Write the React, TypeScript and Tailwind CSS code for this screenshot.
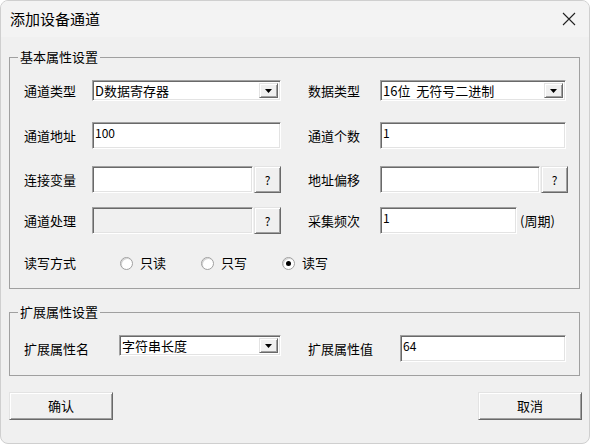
import React from "react"

const sunken =
    "border border-t-[#a0a0a0] border-l-[#a0a0a0] border-r-white border-b-white shadow-[inset_1px_1px_0_#696969,inset_-1px_-1px_0_#e3e3e3]"
const raised =
    "border border-t-[#e3e3e3] border-l-[#e3e3e3] border-r-[#696969] border-b-[#696969] shadow-[inset_1px_1px_0_#ffffff,inset_-1px_-1px_0_#a0a0a0] bg-[#f0f0f0]"

function Combo({ value, width }: { value: string; width: string }) {
    return (
        <div className={`${sunken} ${width} h-[21px] bg-white flex items-center justify-between pl-[2px] pr-[2px]`}>
            <span className="text-[13px] leading-[15px] text-black whitespace-pre">{value}</span>
            <div className={`${raised} w-[19px] h-[15px] flex items-center justify-center`}>
                <svg width="7" height="4" viewBox="0 0 7 4">
                    <path d="M0 0h7L3.5 4z" fill="#000" />
                </svg>
            </div>
        </div>
    )
}

function TextBox({ value, width, disabled }: { value?: string; width: string; disabled?: boolean }) {
    return (
        <div className={`${sunken} ${width} h-[27px] ${disabled ? "bg-[#f0f0f0]" : "bg-white"} pl-[2px]`}>
            <span className="text-[12px] leading-[14px] text-black">{value}</span>
        </div>
    )
}

function AskButton() {
    return (
        <div className={`${raised} w-[27px] h-[27px] flex items-center justify-center text-[12px] text-black`}>?</div>
    )
}

function Radio({ label, checked }: { label: string; checked?: boolean }) {
    return (
        <div className="flex items-center gap-[7px]">
            <div className="w-[13px] h-[13px] rounded-full bg-white border border-[#a0a0a0] shadow-[inset_1px_1px_0_#d4d4d4] flex items-center justify-center">
                {checked && <div className="w-[5px] h-[5px] rounded-full bg-black" />}
            </div>
            <span className="text-[13px]">{label}</span>
        </div>
    )
}

export default function App() {
    return (
        <div className="w-[590px] h-[444px] bg-white font-['Noto_Sans_CJK_SC',sans-serif] text-black">
            <div className="w-[590px] h-[444px] rounded-[8px] border border-[#cfcfcf] bg-[#f0f0f0] overflow-hidden flex flex-col">
                {/* title bar */}
                <div className="h-[36px] bg-[#f3f3f3] flex items-center justify-between pl-[9px] pr-[13px]">
                    <span className="text-[15px]">添加设备通道</span>
                    <svg width="14" height="14" viewBox="0 0 14 14">
                        <path d="M1 1L13 13M13 1L1 13" stroke="#222" strokeWidth="1.1" />
                    </svg>
                </div>

                <fieldset className="ml-[8px] w-[571px] mt-[13px] border border-[#a0a0a0] pl-[14px] pb-[15px]">
                    <legend className="ml-[-6px] px-[2px] text-[13px] leading-[14px]">基本属性设置</legend>

                    <div className="flex items-center h-[21px] mt-[16px] text-[13px]">
                        <span className="w-[68px]">通道类型</span>
                        <Combo value="D数据寄存器" width="w-[189px]" />
                        <span className="w-[72px] ml-[27px]">数据类型</span>
                        <Combo value="16位  无符号二进制" width="w-[186px]" />
                    </div>

                    <div className="flex items-center h-[27px] mt-[21px] text-[13px]">
                        <span className="w-[68px]">通道地址</span>
                        <TextBox value="100" width="w-[189px]" />
                        <span className="w-[72px] ml-[27px]">通道个数</span>
                        <TextBox value="1" width="w-[186px]" />
                    </div>

                    <div className="flex items-center h-[27px] mt-[17px] text-[13px]">
                        <span className="w-[68px]">连接变量</span>
                        <TextBox width="w-[161px]" />
                        <div className="ml-[1px]"><AskButton /></div>
                        <span className="w-[72px] ml-[27px]">地址偏移</span>
                        <TextBox width="w-[160px]" />
                        <div className="ml-[1px]"><AskButton /></div>
                    </div>

                    <div className="flex items-center h-[27px] mt-[14px] text-[13px]">
                        <span className="w-[68px]">通道处理</span>
                        <TextBox width="w-[161px]" disabled />
                        <div className="ml-[1px]"><AskButton /></div>
                        <span className="w-[72px] ml-[27px]">采集频次</span>
                        <TextBox value="1" width="w-[137px]" />
                        <span className="ml-[3px]">(周期)</span>
                    </div>

                    <div className="flex items-center h-[20px] mt-[19px] text-[13px]">
                        <span className="w-[96px]">读写方式</span>
                        <div className="w-[81px]"><Radio label="只读" /></div>
                        <div className="w-[81px]"><Radio label="只写" /></div>
                        <Radio label="读写" checked />
                    </div>
                </fieldset>

                <fieldset className="ml-[8px] w-[571px] mt-[16px] border border-[#a0a0a0] pl-[14px] pb-[13px]">
                    <legend className="ml-[-6px] px-[2px] text-[13px] leading-[14px]">扩展属性设置</legend>

                    <div className="flex items-start h-[27px] mt-[16px] text-[13px]">
                        <span className="w-[95px] self-center mt-[1px]">扩展属性名</span>
                        <Combo value="字符串长度" width="w-[162px]" />
                        <span className="w-[92px] ml-[27px] self-center mt-[1px]">扩展属性值</span>
                        <TextBox value="64" width="w-[166px]" />
                    </div>
                </fieldset>

                <div className="flex justify-between ml-[8px] w-[573px] mt-[16px] text-[13px]">
                    <div className={`${raised} w-[104px] h-[28px] flex items-center justify-center`}>确认</div>
                    <div className={`${raised} w-[104px] h-[28px] flex items-center justify-center`}>取消</div>
                </div>
            </div>
        </div>
    )
}
